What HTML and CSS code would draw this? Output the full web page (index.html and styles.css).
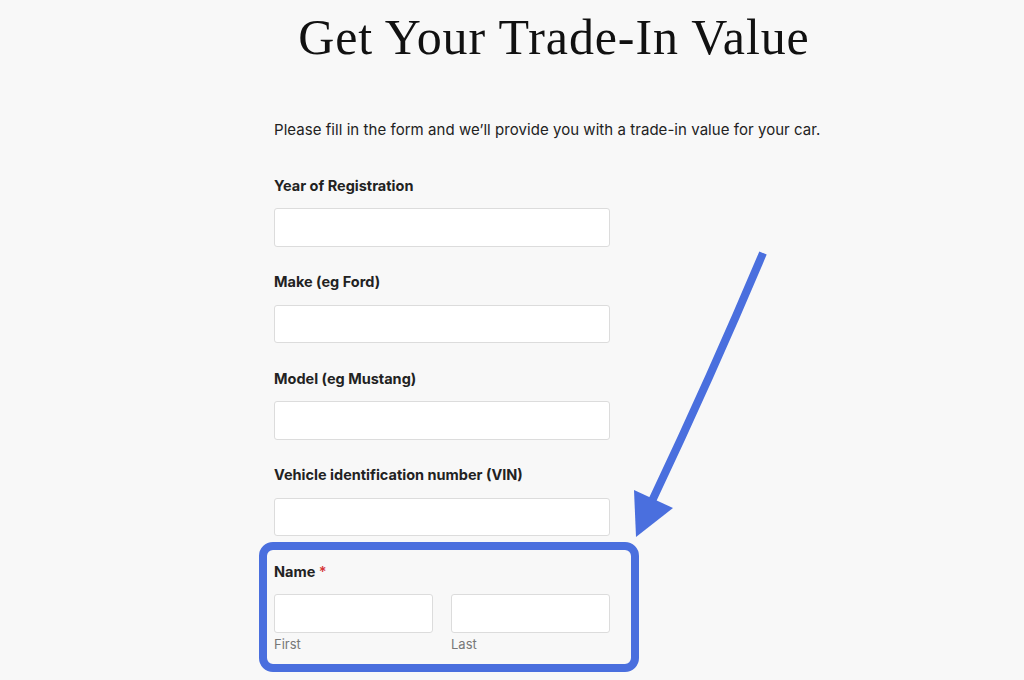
FILE: index.html
```html
<!DOCTYPE html>
<html lang="en">
<head>
<meta charset="utf-8">
<title>Get Your Trade-In Value</title>
<link rel="stylesheet" href="styles.css">
</head>
<body>
<main class="page">
  <h1 class="title">Get Your Trade-In Value</h1>
  <p class="intro">Please fill in the form and we’ll provide you with a trade-in value for your car.</p>
  <form class="form">
    <div class="field">
      <label class="label" for="year">Year of Registration</label>
      <input class="input" id="year" type="text">
    </div>
    <div class="field">
      <label class="label" for="make">Make (eg Ford)</label>
      <input class="input" id="make" type="text">
    </div>
    <div class="field">
      <label class="label" for="model">Model (eg Mustang)</label>
      <input class="input" id="model" type="text">
    </div>
    <div class="field">
      <label class="label" for="vin">Vehicle identification number (VIN)</label>
      <input class="input" id="vin" type="text">
    </div>
    <div class="field field-name">
      <div class="label">Name <span class="req">*</span></div>
      <div class="name-row">
        <div class="name-part">
          <input class="input" id="first" type="text">
          <label class="sublabel" for="first">First</label>
        </div>
        <div class="name-part">
          <input class="input" id="last" type="text">
          <label class="sublabel" for="last">Last</label>
        </div>
      </div>
    </div>
  </form>
</main>
<div class="highlight"></div>
<svg class="arrow" width="1024" height="680" viewBox="0 0 1024 680" aria-hidden="true">
  <path d="M763 253 Q712 374 652 501" fill="none" stroke="#4a6fde" stroke-width="8"/>
  <polygon points="634,490 673,508 636,537" fill="#4a6fde"/>
</svg>
</body>
</html>
```
FILE: styles.css
```css
html, body {
  margin: 0;
  padding: 0;
  background: #f8f8f8;
}
body {
  width: 1024px;
  height: 680px;
  overflow: hidden;
  position: relative;
  font-family: Inter, "Liberation Sans", sans-serif;
  color: #222;
}
.page {
  padding-left: 274px;
  width: 560px;
}
.title {
  margin: 12px 0 0 0;
  font-family: "Liberation Serif", "DejaVu Serif", serif;
  font-weight: normal;
  font-size: 50px;
  line-height: 50px;
  text-align: center;
  color: #111;
  letter-spacing: 0.9px;
}
.intro {
  margin: 58px 0 0 0;
  font-size: 15px;
  line-height: 20px;
  letter-spacing: 0.05px;
  color: #222;
}
.form {
  margin-top: 35.5px;
  display: flex;
  flex-direction: column;
  gap: 25.5px;
}
.field {
  display: flex;
  flex-direction: column;
  gap: 12.5px;
  width: 336px;
}
.label {
  font-size: 14.5px;
  line-height: 20px;
  font-weight: 700;
  color: #222;
}
.req {
  color: #d63638;
  font-weight: 600;
}
.input {
  box-sizing: border-box;
  width: 100%;
  height: 38.5px;
  margin: 0;
  border: 1px solid #dcdcdc;
  border-radius: 3px;
  background: #fff;
  font: inherit;
  padding: 0 10px;
}
.name-row {
  display: flex;
  gap: 18px;
}
.name-part {
  flex: 1;
  display: flex;
  flex-direction: column;
}
.sublabel {
  margin-top: 2px;
  font-size: 13px;
  line-height: 18px;
  color: #777;
}
.highlight {
  position: absolute;
  left: 259px;
  top: 542px;
  width: 380px;
  height: 130px;
  box-sizing: border-box;
  border: 8px solid #4a6fde;
  border-radius: 14px;
  pointer-events: none;
}
.arrow {
  position: absolute;
  left: 0;
  top: 0;
  pointer-events: none;
}
```
